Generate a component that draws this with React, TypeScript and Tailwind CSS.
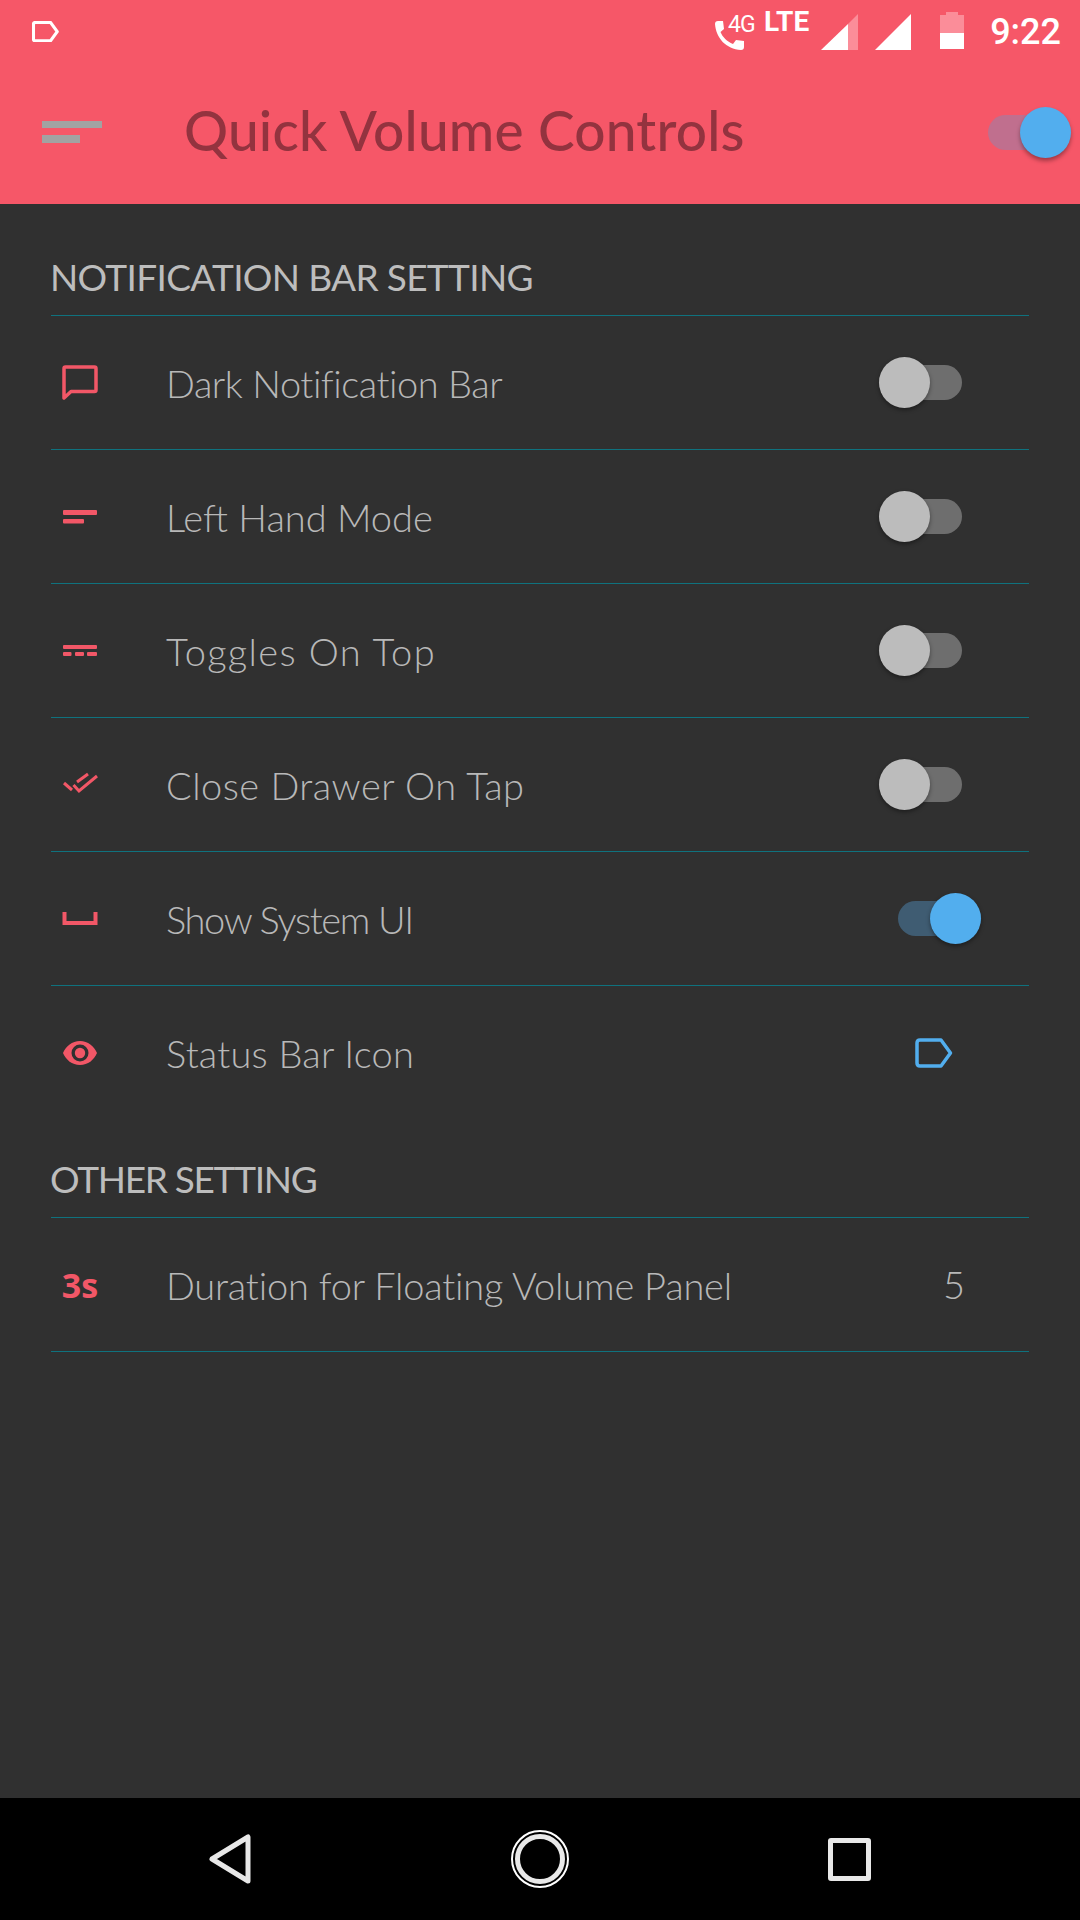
import React from 'react';

function Toggle({ on = false }: { on?: boolean }) {
  return (
    <div className="relative flex h-[51px] w-[83px] items-center">
      <div className={`h-[35px] w-[83px] rounded-full ${on ? 'bg-[#3f5c72]' : 'bg-[#6e6e6e]'}`} />
      <div
        className={`absolute top-0 h-[51px] w-[51px] rounded-full shadow-[0_2px_4px_rgba(0,0,0,0.4)] ${
          on ? 'right-0 bg-[#52aeee]' : 'left-0 bg-[#bcbcbc]'
        }`}
      />
    </div>
  );
}

// Row icons, drawn on a 36x36 box
function ChatIcon() {
  return (
    <svg width="36" height="36" viewBox="0 0 36 36" fill="none">
      <path d="M2 3.5 Q2 2 3.5 2 H32.5 Q34 2 34 3.5 V25 Q34 26.5 32.5 26.5 H9 L2 33 Z" stroke="#f25767" strokeWidth="3.5" strokeLinejoin="round" />
    </svg>
  );
}

function LeftHandIcon() {
  return (
    <svg width="36" height="36" viewBox="0 0 36 36" fill="#f25767">
      <rect x="1" y="11" width="34" height="5" rx="1" />
      <rect x="1" y="20" width="21" height="4.5" rx="1" />
    </svg>
  );
}

function TogglesTopIcon() {
  return (
    <svg width="36" height="36" viewBox="0 0 36 36" fill="#f25767">
      <rect x="1" y="12" width="34" height="4" rx="1" />
      <rect x="1" y="19" width="8.5" height="4" rx="1" />
      <rect x="13" y="19" width="9" height="4" rx="1" />
      <rect x="25" y="19" width="10" height="4" rx="1" />
    </svg>
  );
}

function DoubleCheckIcon() {
  return (
    <svg width="36" height="36" viewBox="0 0 36 36" fill="none" stroke="#f25767" strokeWidth="3">
      <path d="M2 16 L10 23" />
      <path d="M11.5 18 L17 24 L35 9" />
      <path d="M15 15 L26 7" />
    </svg>
  );
}

function BracketIcon() {
  return (
    <svg width="36" height="36" viewBox="0 0 36 36" fill="none" stroke="#f25767" strokeWidth="4">
      <path d="M2.5 11 V22 H33.5 V11" />
    </svg>
  );
}

function EyeIcon() {
  return (
    <svg width="36" height="36" viewBox="0 0 36 36" fill="#f25767">
      <path
        fillRule="evenodd"
        d="M18 6 C26 6 32 11 35 18 C32 25 26 30 18 30 C10 30 4 25 1 18 C4 11 10 6 18 6 Z M18 9.5 A8.5 8.5 0 1 0 18 26.5 A8.5 8.5 0 1 0 18 9.5 Z"
      />
      <circle cx="18" cy="18" r="5.2" />
    </svg>
  );
}

function TagIcon({ color, size, stroke }: { color: string; size: number; stroke: number }) {
  return (
    <svg width={size} height={(size * 30) / 38} viewBox="0 0 38 30" fill="none">
      <path d="M5 2 H26 L35.5 15 L26 28 H5 Q2 28 2 25 V5 Q2 2 5 2 Z" stroke={color} strokeWidth={stroke} strokeLinejoin="round" />
    </svg>
  );
}

interface RowProps {
  icon: React.ReactNode;
  label: string;
  labelClass: string;
  right: React.ReactNode;
  last?: boolean;
}

function Row({ icon, label, labelClass, right, last }: RowProps) {
  return (
    <div className={`flex h-[134px] items-center pl-[11px] ${last ? '' : 'border-b border-[#0f727e]'}`}>
      <div className="flex w-[36px] justify-center">{icon}</div>
      <div className={`ml-[68px] flex-1 pt-[1px] font-['Lato'] text-[38px] font-light text-[#b8b8b8] ${labelClass}`}>{label}</div>
      {right}
    </div>
  );
}

export default function App() {
  return (
    <div className="flex h-[1920px] w-[1080px] flex-col bg-[#303030] font-['Lato',sans-serif]">
      {/* Status bar + toolbar */}
      <div className="h-[204px] bg-[#f65768]">
        <div className="flex h-[60px] items-start text-white">
          <div className="ml-[32px] mt-[21px]">
            <TagIcon color="#ffffff" size={27} stroke={4.5} />
          </div>
          <div className="relative ml-[656px] mt-[20px] h-[30px] w-[30px]">
            <svg width="30" height="30" viewBox="0 0 30 30" fill="#ffffff">
              <path d="M0 4 C0 2 1 1 3 1 H8 L9 9 L5.5 12 C7.5 17 12 21.5 18 24 L21 20 L29 21 V27 C29 29 28 30 26 30 C11 29 1 18 0 4 Z" />
            </svg>
            <span className="absolute left-[13px] top-[-9px] font-['Roboto'] text-[23px] leading-[28px] tracking-[-1px]">4G</span>
          </div>
          <span className="ml-[19px] mt-[7px] font-['Roboto'] text-[28px] font-bold leading-[30px]">LTE</span>
          <svg className="ml-[12px] mt-[14px]" width="37" height="36" viewBox="0 0 37 36">
            <path d="M0 36 L27 10 V36 Z" fill="#ffffff" />
            <path d="M27 10 L37 0 V36 H27 Z" fill="#fb8d99" />
          </svg>
          <svg className="ml-[17px] mt-[14px]" width="36" height="36" viewBox="0 0 36 36" fill="#ffffff">
            <path d="M0 36 L36 0 V36 Z" />
          </svg>
          <svg className="ml-[29px] mt-[12px]" width="24" height="37" viewBox="0 0 24 37">
            <path d="M0 3 H6 V0 H18 V3 H24 V21 H0 Z" fill="#fb8d99" />
            <rect y="21" width="24" height="16" fill="#ffffff" />
          </svg>
          <span className="ml-[26px] mt-[11px] font-['Roboto'] text-[36px] font-medium leading-[42px]">9:22</span>
        </div>
        <div className="flex h-[144px] items-center">
          <div className="ml-[42px] flex w-[60px] flex-col gap-[7px]">
            <div className="h-[7px] w-[60px] bg-[#a2a2a2]" />
            <div className="h-[8px] w-[38px] bg-[#a2a2a2]" />
          </div>
          <div className="mb-[4px] ml-[82px] flex-1 font-['Lato'] text-[55px] font-medium tracking-[0.2px] text-[#93333f]">Quick Volume Controls</div>
          <div className="relative mr-[9px] flex h-[51px] w-[83px] items-center">
            <div className="h-[35px] w-[80px] rounded-full bg-[#c06f8e]" />
            <div className="absolute right-0 top-0 h-[51px] w-[51px] rounded-full bg-[#52aeee] shadow-[0_3px_4px_rgba(0,0,0,0.35)]" />
          </div>
        </div>
      </div>

      {/* Settings */}
      <div className="flex-1 px-[51px]">
        <div className="flex h-[112px] items-end border-b border-[#0f727e] pb-[11px]">
          <span className="-ml-[1px] font-['Lato'] text-[37px] font-normal tracking-[-0.67px] text-[#bdbdbd]">NOTIFICATION BAR SETTING</span>
        </div>
        <Row icon={<ChatIcon />} label="Dark Notification Bar" labelClass="tracking-[-0.46px]" right={<div className="mr-[67px]"><Toggle /></div>} />
        <Row icon={<LeftHandIcon />} label="Left Hand Mode" labelClass="tracking-[0px]" right={<div className="mr-[67px]"><Toggle /></div>} />
        <Row icon={<TogglesTopIcon />} label="Toggles On Top" labelClass="tracking-[1.36px]" right={<div className="mr-[67px]"><Toggle /></div>} />
        <Row icon={<DoubleCheckIcon />} label="Close Drawer On Tap" labelClass="tracking-[0.47px]" right={<div className="mr-[67px]"><Toggle /></div>} />
        <Row icon={<BracketIcon />} label="Show System UI" labelClass="tracking-[-1.36px]" right={<div className="mr-[48px]"><Toggle on /></div>} />
        <Row icon={<EyeIcon />} label="Status Bar Icon" labelClass="tracking-[0.2px]" right={<div className="mr-[76px]"><TagIcon color="#52aeee" size={38} stroke={3.5} /></div>} last />

        <div className="flex h-[98px] items-end border-b border-[#0f727e] pb-[11px]">
          <span className="-ml-[1px] font-['Lato'] text-[37px] font-normal tracking-[-1.3px] text-[#bdbdbd]">OTHER SETTING</span>
        </div>
        <Row
          icon={<span className="font-['Open_Sans'] text-[34px] font-bold leading-none text-[#f25767]">3s</span>}
          label="Duration for Floating Volume Panel"
          labelClass="tracking-[-0.2px]"
          right={<span className="mr-[64px] font-['Lato'] text-[38px] font-light text-[#b8b8b8]">5</span>}
        />
      </div>

      {/* Navigation bar */}
      <div className="flex h-[122px] items-center bg-black">
        <svg className="ml-[208px]" width="44" height="52" viewBox="0 0 44 52" fill="none">
          <path d="M40 4 V48 L4 26 Z" stroke="#e8e8e8" strokeWidth="5" strokeLinejoin="round" />
        </svg>
        <svg className="ml-[259px]" width="58" height="58" viewBox="0 0 58 58" fill="none">
          <circle cx="29" cy="29" r="28" stroke="#ffffff" strokeWidth="2" />
          <circle cx="29" cy="29" r="22.5" stroke="#e8e8e8" strokeWidth="5" />
        </svg>
        <div className="ml-[259px] h-[43px] w-[43px] rounded-[3px] border-[5px] border-[#e8e8e8]" />
      </div>
    </div>
  );
}
